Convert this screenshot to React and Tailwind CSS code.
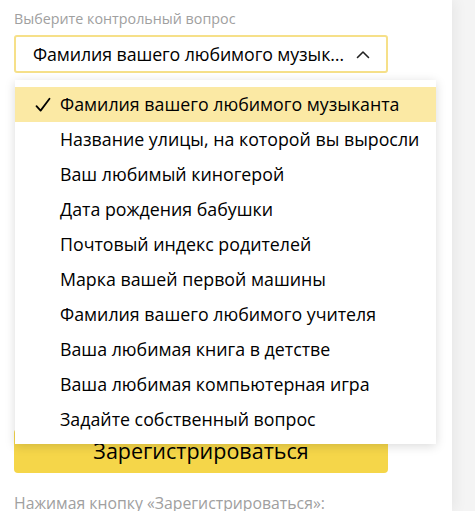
import React from 'react';

const questions = [
  'Фамилия вашего любимого музыканта',
  'Название улицы, на которой вы выросли',
  'Ваш любимый киногерой',
  'Дата рождения бабушки',
  'Почтовый индекс родителей',
  'Марка вашей первой машины',
  'Фамилия вашего любимого учителя',
  'Ваша любимая книга в детстве',
  'Ваша любимая компьютерная игра',
  'Задайте собственный вопрос',
];

function Check() {
  return (
    <svg width="16" height="16" viewBox="0 0 16 16" fill="none" className="shrink-0">
      <path d="M1.5 9.2 L5.6 13.6 L14.5 1.8" stroke="#000" strokeWidth="1.8" strokeLinecap="round" strokeLinejoin="round" />
    </svg>
  );
}

function Caret() {
  return (
    <svg width="14" height="9" viewBox="0 0 14 9" fill="none">
      <path d="M1.5 7.5 L7 2 L12.5 7.5" stroke="#222" strokeWidth="1.6" strokeLinecap="round" strokeLinejoin="round" />
    </svg>
  );
}

export default function App() {
  const selected = 0;

  return (
    <div className="flex h-[511px] w-[475px] overflow-hidden bg-[#f4f4f4] font-['Open_Sans',sans-serif]">
      {/* Main form column */}
      <div className="relative w-[452px] shrink-0 bg-white pl-[14px] shadow-[4px_0_12px_rgba(0,0,0,0.05)]">
        <div className="pt-[9px] text-[14.3px] leading-[20px] text-[#a0a0a0]">
          Выберите контрольный вопрос
        </div>

        <button className="mt-[6px] flex h-[38px] w-[374px] items-center rounded-[3px] border-2 border-[#f6e089] pl-[17px] text-left">
          <span className="whitespace-nowrap text-[17.8px] tracking-[-0.1px] text-black">Фамилия вашего любимого музык…</span>
          <span className="ml-[12px] shrink-0"><Caret /></span>
        </button>

        {/* Other fields hidden by the dropdown */}
        <div className="h-[348px]" />

        <div className="mt-[8px] flex h-[44px] w-[374px] items-center justify-center rounded-[4px] bg-[#f5d649] text-[21.5px] text-black">
          Зарегистрироваться
        </div>

        <div className="mt-[19px] text-[15.8px] leading-[22px] text-[#a0a0a0]">
          Нажимая кнопку «Зарегистрироваться»:
        </div>

        {/* Dropdown popup */}
        <div className="absolute left-[15px] top-[80px] w-[421px] bg-white py-[7px] shadow-[0_2px_10px_rgba(0,0,0,0.15)]">
          {questions.map((q, i) => (
            <div
              key={q}
              className={`flex h-[35px] items-center text-[17.8px] text-black ${
                i === selected ? 'bg-[#fbe9a4]' : ''
              }`}
            >
              <span className="flex w-[45px] justify-end pr-[9px]">
                {i === selected && <Check />}
              </span>
              <span className="whitespace-nowrap">{q}</span>
            </div>
          ))}
        </div>
      </div>
    </div>
  );
}
